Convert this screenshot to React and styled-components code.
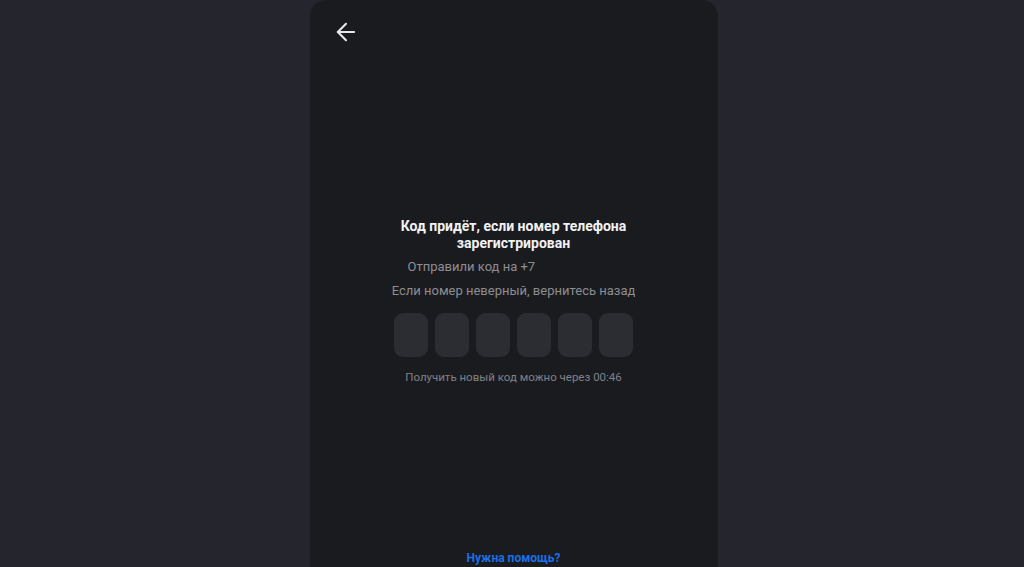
import React from 'react';
import styled, { createGlobalStyle } from 'styled-components';
import { ArrowLeft } from 'lucide-react';

const GlobalStyle = createGlobalStyle`
  html, body {
    margin: 0;
    padding: 0;
    background: #25252d;
    font-family: Roboto, 'Liberation Sans', sans-serif;
    overflow: hidden;
  }
`;

const Page = styled.div`
  display: flex;
  justify-content: center;
  height: 100vh;
`;

const Card = styled.div`
  width: 408px;
  margin-left: 3px;
  height: 100%;
  background: #1a1b1f;
  border-radius: 16px 16px 0 0;
  display: flex;
  flex-direction: column;
  box-sizing: border-box;
`;

const Header = styled.div`
  padding: 18px 0 0 22px;
  height: 46px;
`;

const BackButton = styled.button`
  background: none;
  border: 0;
  padding: 0;
  color: #e8e8ea;
  cursor: pointer;
  display: flex;
`;

const Main = styled.div`
  flex: 1;
  display: flex;
  flex-direction: column;
  align-items: center;
  padding-top: 154px;
`;

const Title = styled.h1`
  margin: 0;
  font-size: 14px;
  line-height: 17px;
  font-weight: 700;
  color: #f2f2f4;
  text-align: center;
  width: 240px;
`;

const Hint = styled.p`
  margin: ${({ top }) => top}px 0 0;
  font-size: 13px;
  line-height: 16px;
  color: #8d8d93;
  white-space: nowrap;
  text-align: ${({ left }) => (left ? 'left' : 'center')};
  width: ${({ left }) => (left ? '212px' : 'auto')};
  overflow: hidden;
`;

const Hidden = styled.span`
  visibility: hidden;
`;

const Boxes = styled.div`
  display: flex;
  gap: 7px;
  margin-top: 14px;
`;

const Box = styled.input`
  width: 34px;
  height: 44px;
  box-sizing: border-box;
  border: 0;
  border-radius: 9px;
  background: #2c2d32;
  color: #f2f2f4;
  text-align: center;
  font-size: 18px;
  outline: none;
  padding: 0;
`;

const Timer = styled.p`
  margin: 14px 0 0;
  font-size: 11.5px;
  line-height: 13px;
  color: #818188;
`;

const Footer = styled.div`
  display: flex;
  justify-content: center;
  padding-bottom: 2px;
`;

const HelpLink = styled.a`
  font-size: 12px;
  line-height: 14px;
  font-weight: 700;
  color: #1b6fe4;
  text-decoration: none;
  cursor: pointer;
`;

export default function App() {
  return (
    <>
      <GlobalStyle />
      <Page>
        <Card>
          <Header>
            <BackButton aria-label="Назад">
              <ArrowLeft size={28} strokeWidth={1.8} />
            </BackButton>
          </Header>
          <Main>
            <Title>Код придёт, если номер телефона зарегистрирован</Title>
            <Hint top={7} left>
              Отправили код на +7<Hidden> 000 000-00-00</Hidden>
            </Hint>
            <Hint top={8}>Если номер неверный, вернитесь назад</Hint>
            <Boxes>
              {[0, 1, 2, 3, 4, 5].map(i => (
                <Box key={i} maxLength={1} inputMode="numeric" />
              ))}
            </Boxes>
            <Timer>Получить новый код можно через 00:46</Timer>
          </Main>
          <Footer>
            <HelpLink>Нужна помощь?</HelpLink>
          </Footer>
        </Card>
      </Page>
    </>
  );
}
